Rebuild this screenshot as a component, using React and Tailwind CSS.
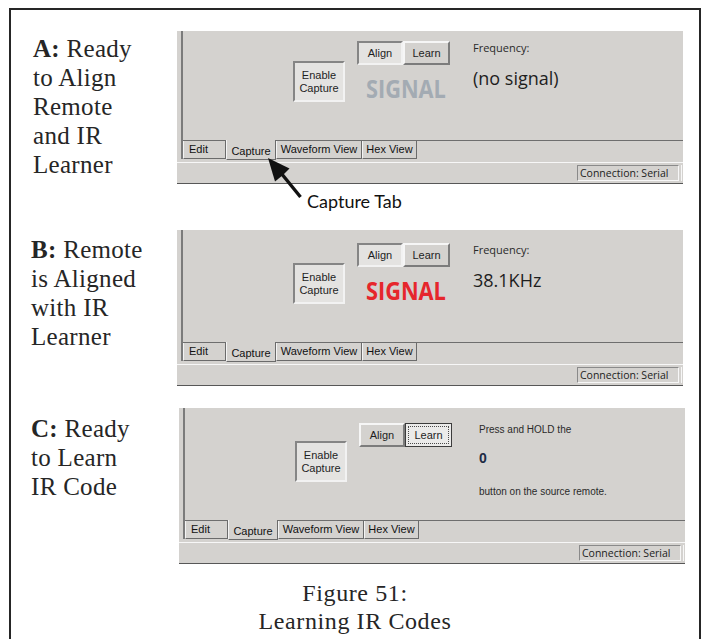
import React from "react";

function PressedBtn({ className = "", children }) {
  return (
    <div
      className={`flex flex-col items-center justify-center border-2 border-t-[#858585] border-l-[#858585] border-b-[#f2f2f2] border-r-[#f2f2f2] bg-[#e4e3e1] font-['Liberation_Sans',sans-serif] text-[11px] leading-[13px] text-[#1e1e1e] ${className}`}
    >
      {children}
    </div>
  );
}

function RaisedBtn({ className = "", children }) {
  return (
    <div
      className={`flex items-center justify-center border-2 border-t-[#f6f6f6] border-l-[#f6f6f6] border-b-[#7c7c7c] border-r-[#7c7c7c] bg-[#d4d2cf] font-['Liberation_Sans',sans-serif] text-[11px] leading-[13px] text-[#1e1e1e] ${className}`}
    >
      {children}
    </div>
  );
}

function FocusBtn({ className = "", children }) {
  return (
    <div
      className={`flex items-center justify-center border border-[#3c3c3c] bg-[#ebebea] p-[2px] ${className}`}
    >
      <div className="flex h-full w-full items-center justify-center border border-dotted border-[#4a4a4a] font-['Liberation_Sans',sans-serif] text-[11px] leading-[13px] text-[#1e1e1e]">
        {children}
      </div>
    </div>
  );
}

function EnableCapture({ className = "" }) {
  return (
    <PressedBtn className={`h-[41px] w-[52px] ${className}`}>
      <span>Enable</span>
      <span>Capture</span>
    </PressedBtn>
  );
}

function Tabs() {
  const tab =
    "flex h-[18px] items-center border-b border-r border-l border-[#6b6b6b] border-l-[#f4f4f4] font-['Liberation_Sans',sans-serif] text-[11px] leading-[13px] text-[#111]";
  return (
    <div className="flex h-[19px] border-t border-[#6e6e6e]">
      <div className={`${tab} w-[43px] pl-[5px]`}>Edit</div>
      <div className="-mt-px flex h-[20px] w-[50px] justify-center border-b border-r border-l border-[#6b6b6b] border-l-[#f4f4f4] bg-[#d4d2cf] pt-[5px] font-['Liberation_Sans',sans-serif] text-[11px] leading-[13px] text-[#111]">
        Capture
      </div>
      <div className={`${tab} w-[86px] justify-center`}>Waveform View</div>
      <div className={`${tab} w-[55px] justify-center`}>Hex View</div>
    </div>
  );
}

function Shell({ contentClass, children }) {
  return (
    <div className="flex w-[506px] flex-col bg-[#d4d2cf]">
      <div className="ml-[4px] border-l-2 border-[#7b7b7b]">
        <div className={`flex ${contentClass}`}>{children}</div>
        <Tabs />
      </div>
      <div className="h-[3px]" />
      <div className="flex h-[22px] items-center justify-end border-t border-b border-t-[#f7f7f7] border-b-[#575757] pr-[1px]">
        <div className="h-[16px] w-[102px] border border-t-[#8a8a8a] border-l-[#8a8a8a] border-b-[#f7f7f7] border-r-[#f7f7f7] pl-[2px] font-['Open_Sans',sans-serif] text-[10.5px] leading-[14px] text-[#222]">
          Connection: Serial
        </div>
        <div className="ml-[2px] h-[16px] w-px bg-[#f7f7f7]" />
      </div>
    </div>
  );
}

function AlignPanel({ contentClass, enableClass, alignClass, freqClass, signalClass, value }) {
  return (
    <Shell contentClass={contentClass}>
      <EnableCapture className={enableClass} />
      <div className={`ml-[12px] flex w-[93px] shrink-0 flex-col ${alignClass}`}>
        <div className="flex h-[24px]">
          <PressedBtn className="w-[46px]">Align</PressedBtn>
          <RaisedBtn className="w-[47px]">Learn</RaisedBtn>
        </div>
        <div
          className={`mt-[11px] ml-[9px] origin-left scale-x-[0.87] whitespace-nowrap font-['Open_Sans',sans-serif] text-[25px] font-bold leading-[25px] ${signalClass}`}
        >
          SIGNAL
        </div>
      </div>
      <div className={`ml-[23px] flex flex-col font-['Open_Sans',sans-serif] ${freqClass}`}>
        <div className="text-[11px] leading-[15px] text-[#2a2a2a]">Frequency:</div>
        <div className="mt-[11px] whitespace-nowrap text-[18px] leading-[24px] text-[#1e1e1e]">{value}</div>
      </div>
    </Shell>
  );
}

function LearnPanel() {
  return (
    <Shell contentClass="h-[112px]">
      <EnableCapture className="ml-[110px] mt-[33px]" />
      <div className="ml-[12px] mt-[15px] flex h-[24px]">
        <RaisedBtn className="w-[46px]">Align</RaisedBtn>
        <FocusBtn className="w-[47px]">Learn</FocusBtn>
      </div>
      <div className="ml-[27px] mt-[16px] flex flex-col font-['Liberation_Sans',sans-serif] text-[10px] text-[#2a2a2a]">
        <div className="leading-[12px]">Press and HOLD the</div>
        <div className="mt-[14px] text-[14px] font-bold leading-[16px] text-[#1c2b44]">0</div>
        <div className="mt-[20px] leading-[12px]">button on the source remote.</div>
      </div>
    </Shell>
  );
}

const labelCls =
  "font-['Liberation_Serif',serif] text-[25px] leading-[29px] tracking-[0.3px] text-[#262626]";

export default function App() {
  return (
    <div className="relative h-[639px] w-[702px] overflow-hidden bg-white">
      <div className="ml-[9px] mt-[8px] h-[660px] w-[692px] border-2 border-b-0 border-[#262626]">
        {/* Row A */}
        <div className="mt-[21px] flex">
          <div className={`w-[166px] pl-[22px] pt-[3px] ${labelCls}`}>
            <b>A:</b> Ready
            <br />
            to Align
            <br />
            Remote
            <br />
            and IR
            <br />
            Learner
          </div>
          <AlignPanel
            contentClass="h-[109px]"
            enableClass="ml-[110px] mt-[30px]"
            alignClass="mt-[10px]"
            freqClass="mt-[9px]"
            signalClass="text-[#a3abb3]"
            value="(no signal)"
          />
        </div>

        {/* annotation */}
        <div className="h-[46px] pl-[296px] pt-[6px] font-['Lato',sans-serif] text-[18px] leading-[22px] text-[#111]">
          Capture Tab
        </div>

        {/* Row B */}
        <div className="flex">
          <div className={`w-[166px] pl-[20px] pt-[5px] ${labelCls}`}>
            <b>B:</b> Remote
            <br />
            is Aligned
            <br />
            with IR
            <br />
            Learner
          </div>
          <AlignPanel
            contentClass="h-[112px]"
            enableClass="ml-[110px] mt-[33px]"
            alignClass="mt-[13px]"
            freqClass="mt-[12px]"
            signalClass="text-[#e6262c]"
            value="38.1KHz"
          />
        </div>

        {/* Row C */}
        <div className="mt-[22px] flex">
          <div className={`w-[168px] pl-[20px] pt-[6px] ${labelCls}`}>
            <b>C:</b> Ready
            <br />
            to Learn
            <br />
            IR Code
          </div>
          <LearnPanel />
        </div>

        {/* caption */}
        <div className="mt-[15px] text-center font-['Liberation_Serif',serif] text-[24px] leading-[28px] tracking-[0.6px] text-[#262626]">
          Figure 51:
          <br />
          Learning IR Codes
        </div>
      </div>

      <svg
        className="pointer-events-none absolute left-[262px] top-[154px] h-[48px] w-[44px]"
        viewBox="262 154 44 48"
      >
        <line x1="281" y1="173" x2="300.5" y2="197" stroke="#111" strokeWidth="3.4" />
        <polygon points="268,158 289.5,168.5 283,175 275,181.5" fill="#111" />
      </svg>
    </div>
  );
}
